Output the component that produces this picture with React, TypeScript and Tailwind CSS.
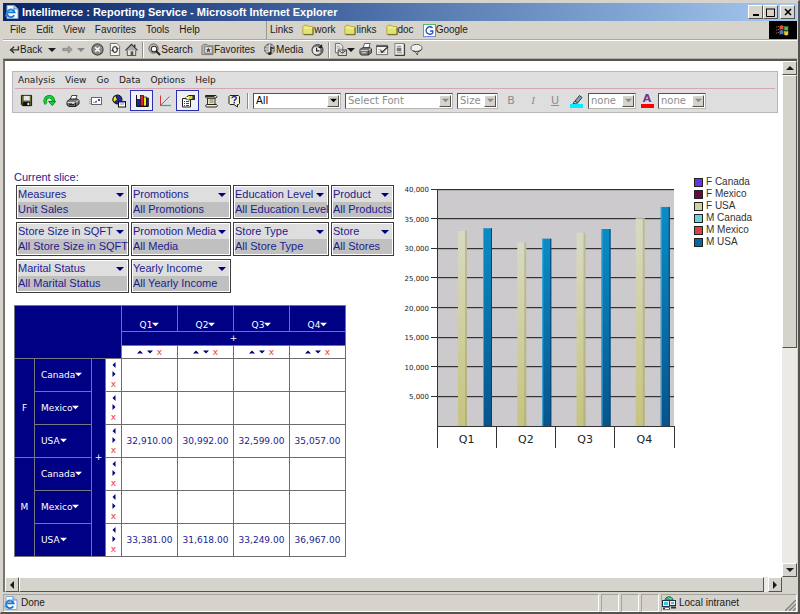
import type { ReactNode } from "react";

const MENU = ["File", "Edit", "View", "Favorites", "Tools", "Help"];
const LINKS = ["work", "links", "doc"];
const APP_MENU = ["Analysis", "View", "Go", "Data", "Options", "Help"];

const SLICES: (readonly [string, string])[] = [
  ["Measures", "Unit Sales"],
  ["Promotions", "All Promotions"],
  ["Education Level", "All Education Level"],
  ["Product", "All Products"],
  ["Store Size in SQFT", "All Store Size in SQFT"],
  ["Promotion Media", "All Media"],
  ["Store Type", "All Store Type"],
  ["Store", "All Stores"],
  ["Marital Status", "All Marital Status"],
  ["Yearly Income", "All Yearly Income"],
];

const QUARTERS = ["Q1", "Q2", "Q3", "Q4"];

const GROUPS = [
  {
    name: "F",
    rows: [
      { country: "Canada", values: ["", "", "", ""] },
      { country: "Mexico", values: ["", "", "", ""] },
      { country: "USA", values: ["32,910.00", "30,992.00", "32,599.00", "35,057.00"] },
    ],
  },
  {
    name: "M",
    rows: [
      { country: "Canada", values: ["", "", "", ""] },
      { country: "Mexico", values: ["", "", "", ""] },
      { country: "USA", values: ["33,381.00", "31,618.00", "33,249.00", "36,967.00"] },
    ],
  },
];

const LEGEND = [
  ["F Canada", "#6633e6"],
  ["F Mexico", "#660a3c"],
  ["F USA", "#d2d09c"],
  ["M Canada", "#6ccfe0"],
  ["M Mexico", "#dc4340"],
  ["M USA", "#0568a0"],
];

const RAISED = "bg-[#d6d3cc] border border-t-white border-l-white border-r-[#55534f] border-b-[#55534f]";

function Caret({ dir = "down", size = 8, className = "" }: { dir?: "up" | "down" | "left" | "right"; size?: number; className?: string }) {
  const points = {
    down: "0,2 8,2 4,6",
    up: "0,6 8,6 4,2",
    left: "6,0 6,8 2,4",
    right: "2,0 2,8 6,4",
  }[dir];
  return (
    <svg width={size} height={size} viewBox="0 0 8 8" className={`shrink-0 fill-current ${className}`} aria-hidden="true">
      <polygon points={points} />
    </svg>
  );
}

function Svg({ children, size = 14 }: { children: ReactNode; size?: number }) {
  return (
    <svg width={size} height={size} viewBox="0 0 14 14" className="shrink-0" fill="none" aria-hidden="true">
      {children}
    </svg>
  );
}

function ExplorerIcon() {
  return (
    <Svg>
      <path d="M2 0.500h7l4 3.500v9.500H2z" fill="#f4f8ff" stroke="#8ba6cf" />
      <path d="M9 0.500V4h4" fill="#bcd3f2" stroke="#6f8fc4" />
      <path d="M9.200 10.200A3.800 3.800 0 1 1 9.600 7.400H3.200" stroke="#1677d2" strokeWidth="1.900" />
      <path d="M1 11.500C0 8 6 3.500 10 4" stroke="#4ba0ea" />
    </Svg>
  );
}

function FolderIcon() {
  return (
    <Svg size={12}>
      <path d="M1 12V3l1.500-1.500h4L8 3h4.500v9z" fill="#e6e272" stroke="#aaa634" />
      <path d="M2 4.500h10" stroke="#fbf9b0" />
      <path d="M13 4v8.500H2" stroke="#55552a" />
    </Svg>
  );
}

function GoogleIcon() {
  return (
    <Svg size={13}>
      <rect width="14" height="14" fill="#fff" />
      <path d="M0.500 0v14" stroke="#5b80dd" />
      <path d="M0 0.500h13" stroke="#3cb54a" />
      <path d="M13.500 0v14" stroke="#e25050" />
      <path d="M0 13.500h13" stroke="#5b80dd" />
      <path d="M10.300 4.300A4 4 0 1 0 10.500 9.500V7.500H7.500" stroke="#2a52c8" strokeWidth="1.500" />
    </Svg>
  );
}

function ArrowIcon({ back = false }: { back?: boolean }) {
  return (
    <Svg size={11}>
      {back ? (
        <path d="M12 3v4.500H3M6.500 3.500L2 7.500l4.500 4" stroke="#333" strokeWidth="1.800" />
      ) : (
        <path d="M1 5.500h7V2.500l5 4.500-5 4.500V8.500H1z" fill="#a3a19b" stroke="#85837e" />
      )}
    </Svg>
  );
}

function StopIcon() {
  return (
    <Svg size={13}>
      <circle cx="7" cy="7" r="6" fill="#8b8b88" stroke="#444" strokeWidth="1.200" />
      <path d="M4.500 4.500l5 5M9.500 4.500l-5 5" stroke="#fff" strokeWidth="1.600" />
    </Svg>
  );
}

function ReloadIcon() {
  return (
    <Svg size={13}>
      <path d="M2.500 0.500h7l3 3v10h-10z" fill="#f4f3ef" stroke="#666" />
      <path d="M10 7c0 4-5 4-5 .5M5 7c0-4 5-4 5-.5" stroke="#444" strokeWidth="1.200" />
      <path d="M3.500 8.500L5 6l1.500 2.500zM8.500 5.500h3L10 8z" fill="#333" />
    </Svg>
  );
}

function HomeIcon() {
  return (
    <Svg size={13}>
      <path d="M2.500 7v6.500h9V7" fill="#e9e7e1" stroke="#444" />
      <path d="M0.500 8L7 1.500 13.500 8" fill="#aaa" stroke="#333" strokeWidth="1.200" />
      <path d="M10.500 4.500V1.500" stroke="#333" strokeWidth="1.500" />
      <rect x="6" y="9" width="3" height="4.500" fill="#555" />
    </Svg>
  );
}

function SearchIcon() {
  return (
    <Svg size={13}>
      <circle cx="6" cy="6" r="5" fill="#c4c3be" stroke="#555" />
      <circle cx="6.500" cy="6.500" r="3" fill="#fff" stroke="#333" strokeWidth="1.200" />
      <path d="M8.500 8.500L13 13" stroke="#222" strokeWidth="2.200" />
    </Svg>
  );
}

function FavoritesIcon() {
  return (
    <Svg size={13}>
      <path d="M1 12.500V3l1.500-1.500h4L8 3h5v9.500z" fill="#b7b6b2" stroke="#777" />
      <rect x="4" y="4" width="8" height="7" fill="#e7e6e2" stroke="#777" />
      <path d="M8 4.800l.8 1.900 2 .1-1.500 1.300.5 2L8 9l-1.800 1.100.5-2-1.500-1.300 2-.1z" fill="#444" />
    </Svg>
  );
}

function MediaIcon() {
  return (
    <Svg size={13}>
      <circle cx="7" cy="6.500" r="5.500" fill="#9c9b97" stroke="#555" />
      <path d="M1.500 6.500h11M7 1v11M3 3c3 2 5 2 8 0M3 10c3-2 5-2 8 0" stroke="#e8e7e3" />
      <path d="M8.500 11V4.500l3 1.500" stroke="#222" strokeWidth="1.400" />
      <circle cx="7.300" cy="11.300" r="1.700" fill="#222" />
    </Svg>
  );
}

function HistoryIcon() {
  return (
    <Svg size={13}>
      <circle cx="7" cy="7.500" r="6" fill="#777" stroke="#444" />
      <circle cx="6" cy="8" r="4" fill="#e7e6e2" />
      <path d="M6 5v3.500h3" stroke="#222" strokeWidth="1.200" />
      <path d="M7.500 5.500L12 1v4.500z" fill="#222" />
    </Svg>
  );
}

function MailPageIcon() {
  return (
    <Svg size={13}>
      <path d="M1.500 0.500h5l3 3v7h-8z" fill="#f1f0ec" stroke="#666" />
      <path d="M3 3.500h3M3 5.500h5" stroke="#999" />
      <path d="M4.500 7.500h9v6h-9zM4.500 7.500L9 11l4.500-3.500" fill="#d9d8d4" stroke="#444" />
    </Svg>
  );
}

function PrinterIcon() {
  return (
    <Svg size={13}>
      <path d="M4.500 5.500l1.500-5h6l-1.500 5z" fill="#fff" stroke="#555" />
      <path d="M1 7l3-2h8l1.500 1.500v4L10 13H2.500L1 11.500z" fill="#777" stroke="#333" />
      <path d="M1.500 8h8.500M10 8l3-2M3 10.500h5" stroke="#ddd" />
      <path d="M10 8v4.500" stroke="#222" />
    </Svg>
  );
}

function EditIcon() {
  return (
    <Svg size={13}>
      <path d="M0.500 2.500h12v10H0.500z" fill="#f5f4f0" stroke="#666" />
      <path d="M0.500 3.500h12" stroke="#444" strokeWidth="1.500" />
      <path d="M2.500 7h3M2.500 10h8" stroke="#aaa" />
      <path d="M5 8l1.500 2L13 4" stroke="#333" strokeWidth="1.500" />
    </Svg>
  );
}

function DocIcon() {
  return (
    <Svg size={13}>
      <path d="M2 0.500h10v12.500H2z" fill="#f5f4f0" stroke="#777" />
      <path d="M12.500 1v12.500H2" stroke="#333" />
      <path d="M4 3.500h5M4 10.500h6" stroke="#888" />
      <rect x="4" y="5" width="5" height="4" fill="#777" />
    </Svg>
  );
}

function DiscussIcon() {
  return (
    <Svg size={13}>
      <path d="M7 1.500c3.500 0 6 1.600 6 3.800S10.800 9 8.500 9.200L8 13 5.500 9.200C3 9 1 7.500 1 5.300s2.500-3.800 6-3.800z" fill="#f1f0ec" stroke="#555" />
      <path d="M3.500 8.500c3 1.200 7 .7 9-1.700" stroke="#333" />
    </Svg>
  );
}

function SaveIcon() {
  return (
    <Svg size={13}>
      <path d="M1.500 1.500h11v11h-10l-1-1z" fill="#6a6a30" stroke="#111" />
      <rect x="4" y="2" width="6.500" height="5" fill="#e4e4e4" />
      <rect x="3" y="8.500" width="8" height="4.500" fill="#111" />
      <rect x="8" y="9.500" width="2" height="2.500" fill="#eee" />
    </Svg>
  );
}

function RefreshIcon() {
  return (
    <Svg size={13}>
      <path d="M3.500 10.500A4.500 4.500 0 1 1 11.200 8" stroke="#067d18" strokeWidth="3.600" />
      <path d="M3.500 10.500A4.500 4.500 0 1 1 11.200 8" stroke="#10d637" strokeWidth="2.200" />
      <path d="M6 8h7.500L10 12.500z" fill="#10d637" stroke="#067d18" />
    </Svg>
  );
}

function AppPrinterIcon() {
  return (
    <Svg size={14}>
      <path d="M4 6l1.800-4.500H11L9.500 6z" fill="#fff" stroke="#444" />
      <path d="M1 7.500L4 5h7.500l1.500 1.500V10l-3.500 2.500H3L1 11z" fill="#7d7d7d" stroke="#222" />
      <path d="M1.500 8.500h8l3-2" stroke="#ddd" />
      <path d="M3 10.500h5M9.500 8.500v4" stroke="#222" strokeWidth="1.300" />
      <rect x="6" y="9" width="2" height="1" fill="#e2dc2b" />
    </Svg>
  );
}

function EnvelopeIcon() {
  return (
    <Svg size={14}>
      <path d="M0 5.500h2M0 7.500h2M0 9.500h2" stroke="#aaa" />
      <rect x="2.500" y="3.500" width="10" height="7" fill="#fff" stroke="#666" />
      <path d="M4 8.500h4" stroke="#aab" />
      <rect x="9" y="5" width="2" height="2" fill="#3a45b0" />
      <path d="M6 8l2-1" stroke="#3a45b0" />
    </Svg>
  );
}

function PieIcon() {
  return (
    <Svg size={14}>
      <circle cx="5.500" cy="5.500" r="4.500" fill="#2528a0" stroke="#111" />
      <path d="M5.500 5.500L2 8.500A4.500 4.500 0 0 1 3.500 1.500z" fill="#f2ea24" stroke="#111" />
      <rect x="6.500" y="7.500" width="7" height="5.500" fill="#fff" stroke="#111" />
      <path d="M8 10h4" stroke="#88a" />
      <path d="M7 8h6" stroke="#2528a0" />
    </Svg>
  );
}

function BarsIcon() {
  return (
    <Svg size={14}>
      <path d="M1.500 1v11.500H13.500" stroke="#111" />
      <rect x="2.500" y="5.500" width="3" height="6.500" fill="#1720c0" stroke="#111" strokeWidth=".7" />
      <rect x="5.500" y="1.500" width="3" height="10.500" fill="#e02222" stroke="#111" strokeWidth=".7" />
      <rect x="8.500" y="3" width="3" height="9" fill="#f1e51c" stroke="#111" strokeWidth=".7" />
      <rect x="11.500" y="4" width="2" height="8" fill="#1720c0" stroke="#111" strokeWidth=".7" />
    </Svg>
  );
}

function AxesIcon() {
  return (
    <Svg size={14}>
      <path d="M2.500 1.500v10.500" stroke="#d23a3a" />
      <path d="M2.500 11.500H13" stroke="#1cb0a0" strokeWidth="1.200" />
      <path d="M3 11L11.500 2.500" stroke="#2d9e50" />
    </Svg>
  );
}

function PropertiesIcon() {
  return (
    <Svg size={14}>
      <path d="M1.500 4.500h8v8.500h-8z" fill="#fff" stroke="#222" />
      <path d="M3 7.500h1M5 7.500h3M3 9.500h1M5 9.500h3M3 11.500h1M5 11.500h3" stroke="#444" />
      <path d="M4 4.500L7.500 1.500H12v4H9.500L8 6z" fill="#d9d34c" stroke="#222" />
      <path d="M5 3.500h3M6 5h2" stroke="#fff" />
      <rect x="12" y="1" width="2" height="5" fill="#2b2f5c" />
    </Svg>
  );
}

function ScrollIcon() {
  return (
    <Svg size={14}>
      <path d="M3.500 4h7.500v7H3.500z" fill="#e9e5a8" stroke="#333" />
      <path d="M1.500 1.500h10.500l1 1.200-1 1.300H2.500L1.500 3zM2.500 10.500h10l1 1.200-1 1.300h-10l-1-1.200z" fill="#f3efc0" stroke="#222" />
      <path d="M5.500 6h4M5.500 8h4" stroke="#777" />
      <path d="M1.500 2.500h9" stroke="#333" />
    </Svg>
  );
}

function HelpIcon() {
  return (
    <Svg size={14}>
      <path d="M3 1.500h8.500l1 1v7l-1 1H10.500V13L7 10.500H3l-1-1v-7z" fill="#f6f4cc" stroke="#222" />
      <path d="M5 4.300c0-2.400 4.300-2.300 4.300 0C9.300 5.600 7.200 5.700 7.200 7.200" stroke="#22309c" strokeWidth="1.400" />
      <rect x="6.500" y="8" width="1.500" height="1.500" fill="#22309c" />
    </Svg>
  );
}

function IntranetIcon() {
  return (
    <Svg>
      <path d="M3 4.500c0-5 8-5 8 0z" fill="#35a94a" stroke="#156b30" />
      <path d="M6 1l2 2 2-1" stroke="#85cdf2" />
      <rect x=".5" y="4.500" width="7" height="6" fill="#eee" stroke="#234" />
      <rect x="2" y="6" width="4" height="3" fill="#35c5f0" />
      <rect x="7.500" y="4.500" width="6" height="5" fill="#eee" stroke="#234" />
      <rect x="9" y="6" width="3" height="2" fill="#35c5f0" />
      <path d="M1 12.500h7M9 11.500h5" stroke="#234" strokeWidth="2" />
      <path d="M3 12.500h4" stroke="#fff" />
    </Svg>
  );
}

function WindowsFlag() {
  return (
    <svg width="14" height="12" viewBox="0 0 14 12" aria-hidden="true">
      <path d="M3.500 2c1.500-1 2.500-1 4-.2v4c-1.500-.8-2.500-.8-4 .2z" fill="#e2542c" />
      <path d="M8.200 2c1.500.8 2.500.8 4 0v4c-1.500.8-2.500.8-4 0z" fill="#5bb04a" />
      <path d="M3.500 6.800c1.500-1 2.500-1 4-.2v4c-1.500-.8-2.500-.8-4 .2z" fill="#4478d0" />
      <path d="M8.200 6.800c1.500.8 2.500.8 4 0v4c-1.500.8-2.500.8-4 0z" fill="#edc435" />
      <path d="M0 3h1.500M2 2.500h1M0 6h1.500M2 5.500h1M0 9h1.500M2 8.500h1" stroke="#a05a4a" />
    </svg>
  );
}

function Divider() {
  return <span className="h-4 w-0.5 shrink-0 border-l border-[#8f8d88] border-r border-r-white" />;
}

function IconButton({ label, children, className = "" }: { label: string; children: ReactNode; className?: string }) {
  return (
    <button type="button" aria-label={label} className={`flex shrink-0 items-center justify-center ${className}`}>
      {children}
    </button>
  );
}

function TitleBar() {
  return (
    <header className="flex h-[18px] items-center bg-linear-to-r from-[#0a246a] to-[#a6caf0] pr-0.5 pl-0.5">
      <ExplorerIcon />
      <h1 className="flex-1 truncate pl-[3px] text-[11px] leading-none font-bold text-white">
        Intellimerce : Reporting Service - Microsoft Internet Explorer
      </h1>
      <div className="flex text-black">
        <IconButton label="Minimize" className={`h-[14px] w-[15px] ${RAISED}`}>
          <svg width="8" height="8" aria-hidden="true">
            <rect y="6" x="1" width="6" height="2" />
          </svg>
        </IconButton>
        <IconButton label="Maximize" className={`h-[14px] w-[15px] ${RAISED}`}>
          <svg width="9" height="9" aria-hidden="true">
            <path d="M0.500 1v7.500h8V1M0 1h9" fill="none" stroke="#000" />
          </svg>
        </IconButton>
        <IconButton label="Close" className={`ml-0.5 h-[14px] w-[15px] ${RAISED}`}>
          <svg width="8" height="8" aria-hidden="true">
            <path d="M1 1l6 6M7 1L1 7" stroke="#000" strokeWidth="1.600" />
          </svg>
        </IconButton>
      </div>
    </header>
  );
}

function BrowserMenu() {
  return (
    <div className="flex h-[19px] items-stretch border-b border-[#aaa8a2]">
      <nav className="flex w-[263px] shrink-0 items-center gap-2.5 pl-[7px]">
        {MENU.map((item) => (
          <button key={item} type="button">
            {item}
          </button>
        ))}
      </nav>
      <nav className="flex flex-1 items-center gap-[9px] border-l border-[#9a9893] pl-[3px]">
        <span>Links</span>
        {LINKS.map((link) => (
          <a key={link} href="#" className="flex items-center">
            <FolderIcon />
            {link}
          </a>
        ))}
        <a href="#" className="flex items-center">
          <GoogleIcon />
          Google
        </a>
      </nav>
      <div className="flex w-7 items-center justify-center bg-black">
        <WindowsFlag />
      </div>
    </div>
  );
}

function BrowserToolbar() {
  return (
    <div className="flex h-[19px] items-center gap-1 border-t border-b border-t-white border-b-[#b2afa8] pl-1.5">
      <button type="button" className="flex items-center">
        <ArrowIcon back />
        Back
      </button>
      <Caret className="mx-0.5" />
      <IconButton label="Forward">
        <ArrowIcon />
      </IconButton>
      <Caret className="mr-0.5 text-[#8a8883]" />
      <IconButton label="Stop">
        <StopIcon />
      </IconButton>
      <IconButton label="Refresh page">
        <ReloadIcon />
      </IconButton>
      <IconButton label="Home">
        <HomeIcon />
      </IconButton>
      <Divider />
      <button type="button" className="flex items-center">
        <SearchIcon />
        Search
      </button>
      <button type="button" className="ml-1 flex items-center">
        <FavoritesIcon />
        Favorites
      </button>
      <button type="button" className="ml-1 flex items-center">
        <MediaIcon />
        Media
      </button>
      <IconButton label="History" className="ml-1">
        <HistoryIcon />
      </IconButton>
      <Divider />
      <IconButton label="Mail">
        <MailPageIcon />
        <Caret />
      </IconButton>
      <IconButton label="Print page">
        <PrinterIcon />
      </IconButton>
      <IconButton label="Edit page">
        <EditIcon />
      </IconButton>
      <IconButton label="Document">
        <DocIcon />
      </IconButton>
      <IconButton label="Discuss">
        <DiscussIcon />
      </IconButton>
    </div>
  );
}

function Combo({ label, value, width, muted = false }: { label: string; value: string; width: string; muted?: boolean }) {
  return (
    <span className={`relative flex shrink-0 text-[10px] ${width}`}>
      <select
        aria-label={label}
        className={`h-4 w-full appearance-none border border-t-[#55534f] border-r-[#b8b6b0] border-b-[#b8b6b0] border-l-[#55534f] bg-white pl-0.5 leading-none ${
          muted ? "text-[#8d8d8d]" : "text-black"
        }`}
      >
        <option>{value}</option>
      </select>
      <span className={`pointer-events-none absolute top-0.5 right-0.5 flex h-3 w-3 items-center justify-center ${RAISED}`}>
        <Caret size={7} className={muted ? "text-[#8a8883]" : "text-black"} />
      </span>
    </span>
  );
}

function AppToolbar() {
  const tools = [
    { label: "Save", icon: <SaveIcon /> },
    { label: "Refresh", icon: <RefreshIcon /> },
    { label: "Print", icon: <AppPrinterIcon /> },
    { label: "Send", icon: <EnvelopeIcon /> },
    { label: "Chart type", icon: <PieIcon /> },
    { label: "Show chart", icon: <BarsIcon />, active: true },
    { label: "Swap axes", icon: <AxesIcon /> },
    { label: "Properties", icon: <PropertiesIcon />, active: true },
    { label: "Script", icon: <ScrollIcon /> },
    { label: "Help topics", icon: <HelpIcon /> },
  ];

  return (
    <section className="mt-[10px] mr-1 ml-[7px] border border-[#b9b6bd] bg-[#dedede] pr-0.5 pl-0.5 font-['DejaVu_Sans',sans-serif] text-[9px]">
      <nav className="flex h-[17px] items-center gap-[10px] border-b border-[#d5a7b4] pl-[3px]">
        {APP_MENU.map((item) => (
          <button key={item} type="button">
            {item}
          </button>
        ))}
      </nav>
      <div className="flex h-[23px] items-center">
        <div className="flex">
          {tools.map((tool) => (
            <IconButton
              key={tool.label}
              label={tool.label}
              className={tool.active ? "h-[21px] w-[23px] border border-[#2b2fae] bg-[#f0f0f4]" : "h-[21px] w-[23px]"}
            >
              {tool.icon}
            </IconButton>
          ))}
        </div>
        <div className="ml-0.5 flex items-center gap-1">
          <Divider />
          <Combo label="Format target" value="All" width="w-[88px]" />
          <Combo label="Font" value="Select Font" width="w-[108px]" muted />
          <Combo label="Font size" value="Size" width="w-[41px]" muted />
        </div>
        <div className="ml-0.5 flex text-[11px] text-[#8d8d8d]">
          <IconButton label="Bold" className="w-[22px]">
            B
          </IconButton>
          <IconButton label="Italic" className="w-[22px] font-['Liberation_Serif',serif] italic">
            I
          </IconButton>
          <IconButton label="Underline" className="w-[22px] underline">
            U
          </IconButton>
        </div>
        <IconButton label="Highlight" className="w-[22px]">
          <Svg>
            <path d="M5 7l4.500-5.500L12 3.500 7.500 9z" fill="#8fa3a8" stroke="#25404c" />
            <path d="M5 7l2.500 2L3 9.500z" fill="#fff" stroke="#25404c" />
            <rect y="10" width="13" height="4" fill="#00f0ff" />
          </Svg>
        </IconButton>
        <Combo label="Highlight colour" value="none" width="w-12" muted />
        <IconButton label="Text colour" className="w-[22px]">
          <span className="flex w-[13px] flex-col items-center border-b-4 border-[#ff0000] text-[11px] leading-[10px] font-bold text-[#7a2f8e]">A</span>
        </IconButton>
        <Combo label="Text colour value" value="none" width="w-12" muted />
      </div>
    </section>
  );
}

function SlicePanel() {
  return (
    <section className="text-[11px] text-[#1c1c8e]">
      <h2 className="leading-[13px]">Current slice:</h2>
      <div className="mt-px ml-0.5 grid w-max grid-cols-[113px_100px_96px_63px] gap-x-0.5 gap-y-[3px]">
        {SLICES.map(([name, value]) => (
          <div key={name} className="border border-[#3c3c3c] bg-white p-px leading-[15px] whitespace-nowrap">
            <button type="button" className="flex w-full items-center justify-between bg-[#dedede] pr-[3px]">
              {name}
              <Caret className="text-[#000080]" />
            </button>
            <div className="bg-[#c0c0c0]">{value}</div>
          </div>
        ))}
      </div>
    </section>
  );
}

function PivotTable() {
  const cell = "border border-[#6d6d6d] p-0";
  const head = "border border-[#77777f] bg-[#000084] p-0 font-normal text-white";

  return (
    <table className="mt-3 table-fixed border-collapse text-center font-['DejaVu_Sans',sans-serif] text-[9px] leading-none">
      <colgroup>
        <col className="w-5" />
        <col className="w-[57px]" />
        <col className="w-[14px]" />
        <col className="w-4" />
        {QUARTERS.map((q) => (
          <col key={q} className="w-14" />
        ))}
      </colgroup>
      <thead>
        <tr className="h-[26px]">
          <th colSpan={4} rowSpan={3} className={head} aria-label="Members" />
          {QUARTERS.map((q) => (
            <th key={q} scope="col" className={`${head} align-bottom`}>
              <button type="button" className="inline-flex items-center pb-px">
                {q}
                <Caret size={7} className="mb-0.5" />
              </button>
            </th>
          ))}
        </tr>
        <tr className="h-[14px]">
          <th colSpan={4} className={head}>
            <button type="button">+</button>
          </th>
        </tr>
        <tr className="h-[13px]">
          {QUARTERS.map((q) => (
            <td key={q} className={cell}>
              <span className="flex items-center justify-center gap-1 text-[#000080]">
                <Caret dir="up" size={6} />
                <Caret size={6} />
                <button type="button" className="text-[#e83c3c]" aria-label={`Remove ${q}`}>
                  x
                </button>
              </span>
            </td>
          ))}
        </tr>
      </thead>
      <tbody>
        {GROUPS.map((group, g) =>
          group.rows.map((row, r) => (
            <tr key={group.name + row.country} className="h-[33px]">
              {r === 0 && (
                <th scope="rowgroup" rowSpan={3} className={head}>
                  {group.name}
                </th>
              )}
              <th scope="row" className={`${head} text-left`}>
                <button type="button" className="flex items-center pl-1.5">
                  {row.country}
                  <Caret size={7} className="mb-0.5" />
                </button>
              </th>
              {g === 0 && r === 0 && (
                <th rowSpan={6} className={head}>
                  <button type="button">+</button>
                </th>
              )}
              <td className={cell}>
                <span className="flex flex-col items-center gap-[3px] text-[#000080]">
                  <Caret dir="left" size={6} />
                  <Caret dir="right" size={6} />
                  <button type="button" className="leading-[8px] text-[#e83c3c]" aria-label={`Remove ${row.country}`}>
                    x
                  </button>
                </span>
              </td>
              {row.values.map((value, i) => (
                <td key={i} className={`${cell} text-[#1c1c8e]`}>
                  {value}
                </td>
              ))}
            </tr>
          )),
        )}
      </tbody>
    </table>
  );
}

function SalesChart() {
  const left = 37;
  const top = 10;
  const width = 237;
  const height = 237;
  const step = width / 4;
  const y = (value: number) => top + height - (value / 40000) * height;
  const toNumber = (text: string) => Number(text.replace(",", ""));
  const f = GROUPS[0].rows[2].values.map(toNumber);
  const m = GROUPS[1].rows[2].values.map(toNumber);
  const ticks = [5, 10, 15, 20, 25, 30, 35, 40];

  return (
    <svg width="280" height="275" viewBox="0 0 280 275" className="shrink-0 font-['DejaVu_Sans',sans-serif]" role="img" aria-label="Unit sales by quarter">
      <defs>
        <linearGradient id="usaF" x1="0" y1="0" x2="0" y2="1">
          <stop offset="0" stopColor="#d9d9c4" />
          <stop offset="1" stopColor="#c6c47e" />
        </linearGradient>
        <linearGradient id="usaM" x1="0" y1="0" x2="0" y2="1">
          <stop offset="0" stopColor="#0a8cc6" />
          <stop offset="1" stopColor="#07548c" />
        </linearGradient>
      </defs>
      <rect x={left} y={top} width={width} height={height} fill="#cdcacd" />
      <g shapeRendering="crispEdges">
        {ticks.map((t) => (
          <g key={t}>
            <path d={`M${left - 6} ${y(t * 1000)}H${left + width}`} stroke="#333" />
            <path d={`M${left} ${y(t * 1000) + 1}H${left + width}`} stroke="#8c8a8c" strokeWidth=".5" />
          </g>
        ))}
      </g>
      {ticks.map((t) => (
        <text key={t} x={left - 8} y={y(t * 1000) + 3} textAnchor="end" fontSize="7" fill="#222">
          {t},000
        </text>
      ))}
      {QUARTERS.map((q, i) => (
        <g key={q}>
          <rect x={left + i * step + 21} y={y(f[i])} width="9" height={top + height - y(f[i])} fill="url(#usaF)" />
          <rect x={left + i * step + 28} y={y(f[i])} width="2" height={top + height - y(f[i])} fill="#a9a67a" opacity=".6" />
          <rect x={left + i * step + 46} y={y(m[i])} width="9" height={top + height - y(m[i])} fill="url(#usaM)" />
          <rect x={left + i * step + 46} y={y(m[i])} width="1" height={top + height - y(m[i])} fill="#3fa9dc" />
          <rect x={left + i * step + 54} y={y(m[i])} width="1" height={top + height - y(m[i])} fill="#063f70" />
          <text x={left + (i + 0.5) * step} y={top + height + 17} textAnchor="middle" fontSize="11" fill="#222">
            {q}
          </text>
        </g>
      ))}
      <g shapeRendering="crispEdges" stroke="#333">
        <path d={`M${left + 0.5} ${top}V${top + height + 22}M${left} ${top + height + 0.5}H${left + width}`} />
        {[1, 2, 3, 4].map((i) => (
          <path key={i} d={`M${left + i * step} ${top + height}V${top + height + 22}`} />
        ))}
      </g>
    </svg>
  );
}

function Legend() {
  return (
    <ul className="ml-3.5 text-[10px] leading-3 whitespace-nowrap text-[#333]">
      {LEGEND.map(([label, color]) => (
        <li key={label} className="flex items-center gap-[3px]">
          <span className="size-[9px] border border-[#222]" style={{ backgroundColor: color }} />
          {label}
        </li>
      ))}
    </ul>
  );
}

function VerticalScrollbar() {
  return (
    <div className="flex w-[15px] shrink-0 flex-col bg-[#eceae6]">
      <IconButton label="Scroll up" className={`h-3.5 ${RAISED}`}>
        <Caret dir="up" />
      </IconButton>
      <div className="flex-1">
        <div className={`h-[56%] ${RAISED}`} />
      </div>
      <IconButton label="Scroll down" className={`h-3.5 ${RAISED}`}>
        <Caret />
      </IconButton>
    </div>
  );
}

function HorizontalScrollbar() {
  return (
    <div className="flex h-[15px] shrink-0 bg-[#eceae6]">
      <IconButton label="Scroll left" className={`w-3.5 ${RAISED}`}>
        <Caret dir="left" />
      </IconButton>
      <div className={`mr-1 flex-1 ${RAISED}`} />
      <IconButton label="Scroll right" className={`w-3.5 ${RAISED}`}>
        <Caret dir="right" />
      </IconButton>
      <div className="w-[15px] bg-[#d6d3cc]" />
    </div>
  );
}

function StatusBar() {
  const pane = "border border-t-[#a5a39d] border-r-white border-b-white border-l-[#a5a39d]";
  return (
    <footer className="mt-0.5 flex h-[18px] gap-0.5">
      <div className={`flex flex-1 items-center gap-[3px] ${pane}`}>
        <ExplorerIcon />
        Done
      </div>
      <div className={`w-[18px] ${pane}`} />
      <div className={`w-[18px] ${pane}`} />
      <div className={`w-[18px] ${pane}`} />
      <div className={`flex w-[136px] items-center gap-[3px] ${pane}`}>
        <IntranetIcon />
        <span className="flex-1">Local intranet</span>
        <svg width="11" height="11" className="self-end" aria-hidden="true">
          <path d="M0 11L11 0M4 11l7-7M8 11l3-3" stroke="#85837e" strokeWidth="1.500" />
        </svg>
      </div>
    </footer>
  );
}

export default function App() {
  return (
    <div className="flex min-h-screen flex-col border-t border-r-2 border-b-2 border-l border-t-[#d6d3cc] border-r-[#55534f] border-b-[#55534f] border-l-[#d6d3cc] bg-[#d6d3cc] pt-0.5 pr-px pl-0.5 font-['Liberation_Sans',sans-serif] text-[10px] leading-none text-[#1a1a1a]">
      <TitleBar />
      <BrowserMenu />
      <BrowserToolbar />
      <div className="flex flex-1 flex-col border-t-2 border-l-2 border-t-[#55534f] border-l-[#77756f]">
        <div className="flex flex-1">
          <main className="min-w-0 flex-1 overflow-hidden bg-white">
            <AppToolbar />
            <div className="mt-[58px] ml-[9px] flex items-start">
              <div className="w-[386px] shrink-0">
                <SlicePanel />
                <PivotTable />
              </div>
              <div className="mt-[5px] flex items-start">
                <div className="mt-[3px]">
                  <SalesChart />
                </div>
                <Legend />
              </div>
            </div>
          </main>
          <VerticalScrollbar />
        </div>
        <HorizontalScrollbar />
      </div>
      <StatusBar />
    </div>
  );
}
